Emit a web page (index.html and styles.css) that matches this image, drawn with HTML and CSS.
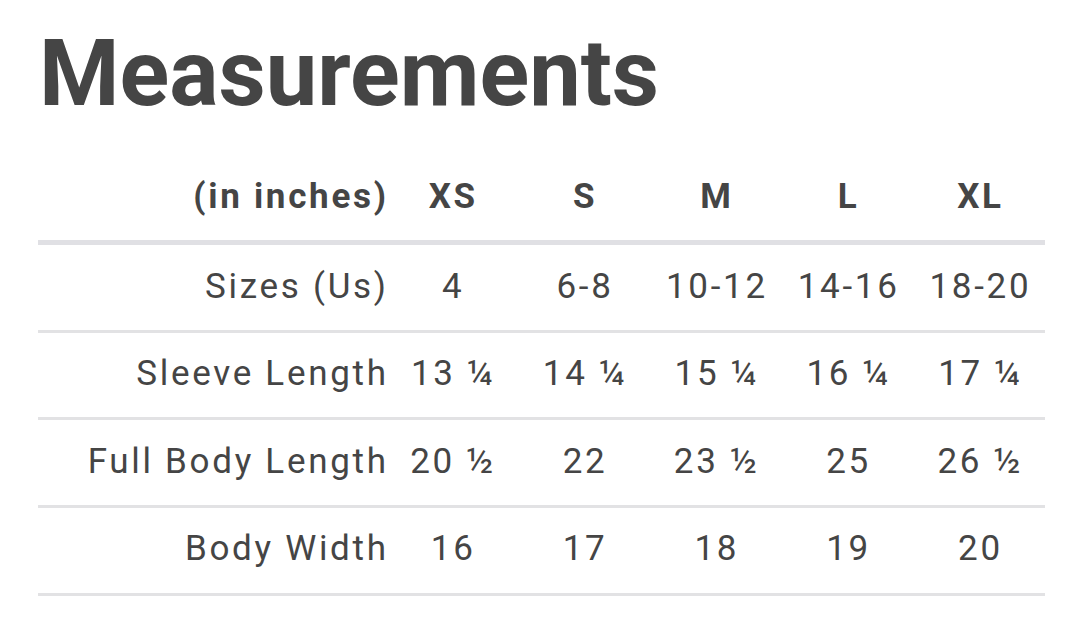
FILE: index.html
```html
<!DOCTYPE html>
<html>
<head>
<meta charset="utf-8">
<link rel="stylesheet" href="styles.css">
</head>
<body>
<div class="page">
  <h1 class="title">Measurements</h1>
  <div class="chart">
    <div class="row head">
      <div class="label">(in inches)</div>
      <div class="cell">XS</div>
      <div class="cell">S</div>
      <div class="cell">M</div>
      <div class="cell">L</div>
      <div class="cell">XL</div>
    </div>
    <div class="row">
      <div class="label">Sizes (Us)</div>
      <div class="cell">4</div>
      <div class="cell">6-8</div>
      <div class="cell">10-12</div>
      <div class="cell">14-16</div>
      <div class="cell">18-20</div>
    </div>
    <div class="row">
      <div class="label">Sleeve Length</div>
      <div class="cell">13 ¼</div>
      <div class="cell">14 ¼</div>
      <div class="cell">15 ¼</div>
      <div class="cell">16 ¼</div>
      <div class="cell">17 ¼</div>
    </div>
    <div class="row">
      <div class="label">Full Body Length</div>
      <div class="cell">20 ½</div>
      <div class="cell">22</div>
      <div class="cell">23 ½</div>
      <div class="cell">25</div>
      <div class="cell">26 ½</div>
    </div>
    <div class="row">
      <div class="label">Body Width</div>
      <div class="cell">16</div>
      <div class="cell">17</div>
      <div class="cell">18</div>
      <div class="cell">19</div>
      <div class="cell">20</div>
    </div>
  </div>
</div>
</body>
</html>
```
FILE: styles.css
```css
html, body {
  margin: 0;
  padding: 0;
  background: #ffffff;
}
body {
  font-family: Roboto, "Liberation Sans", sans-serif;
  color: #454545;
}
.page {
  padding-left: 38px;
  width: 1007px;
}
.title {
  margin: 19px 0 0 1px;
  font-size: 92px;
  line-height: 110px;
  font-weight: 700;
  color: #454545;
}
.chart {
  display: flex;
  flex-direction: column;
}
.row {
  display: grid;
  grid-template-columns: 348px repeat(5, 1fr);
  align-items: center;
  font-size: 35px;
  line-height: 40px;
  letter-spacing: 2.7px;
  padding: 21.5px 0 23.17px;
  border-bottom: 3px solid #e2e2e4;
}
.row.head {
  padding: 48px 0 23px;
  border-bottom: 5px solid #e0e0e4;
  font-weight: 700;
}
.label {
  text-align: right;
  margin-right: -2.7px;
}
.cell {
  text-align: center;
  margin-right: -2.7px;
}
```
